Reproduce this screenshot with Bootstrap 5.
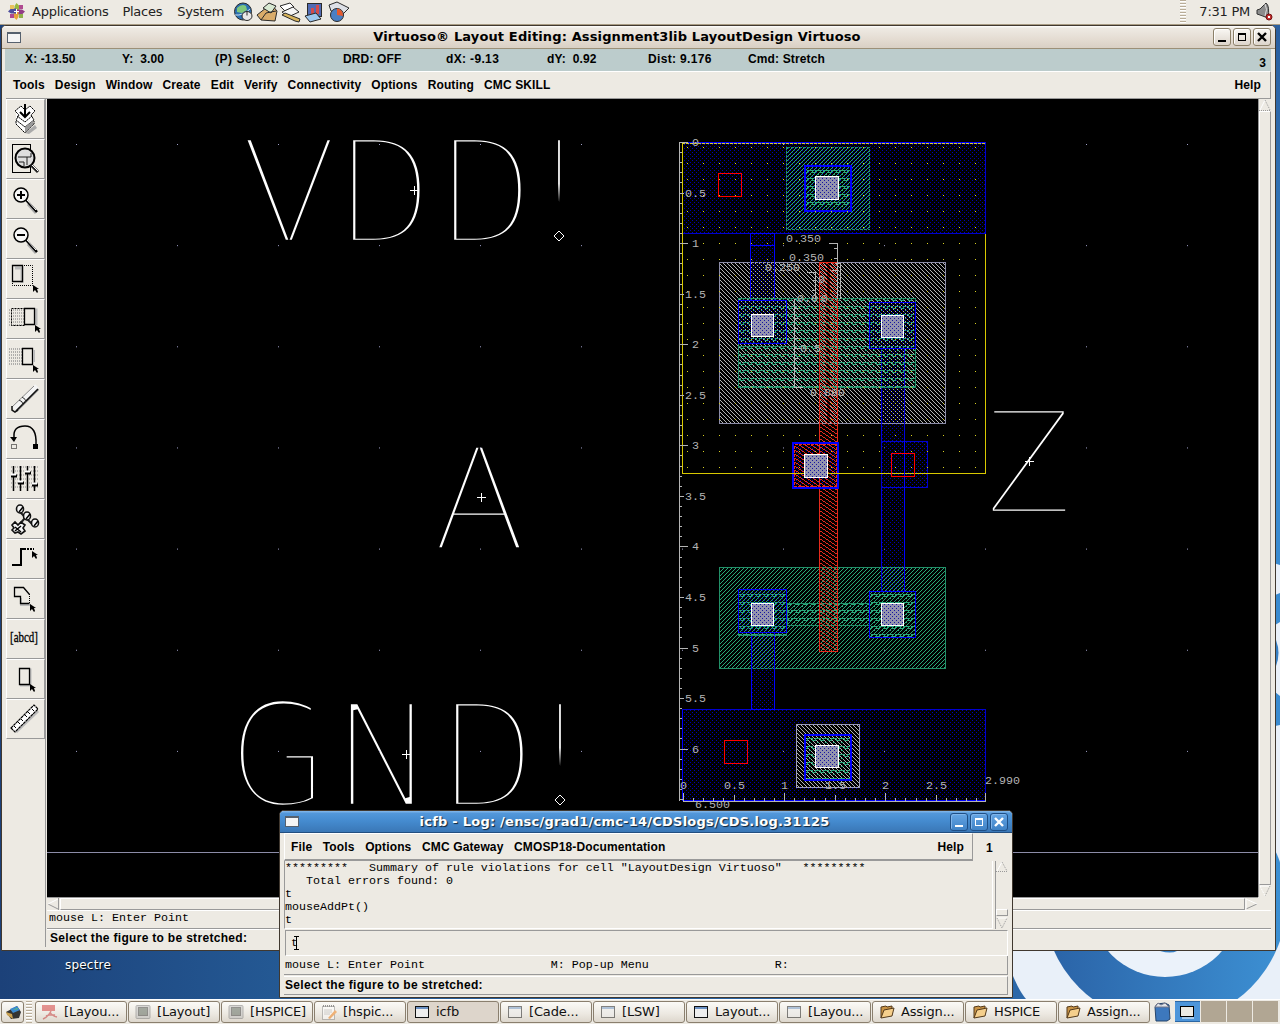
<!DOCTYPE html>
<html lang="en">
<head>
<meta charset="utf-8">
<title>Virtuoso Layout Editing</title>
<link rel="stylesheet" href="https://cdn.jsdelivr.net/npm/bootstrap@5.3.0/dist/css/bootstrap.min.css">
<style>
body{width:1280px;height:1024px;overflow:hidden;font:13px/1 "DejaVu Sans",sans-serif;color:#000;background:#edeae3}
svg{display:block;flex:none}
.panel-top{height:25px;border-bottom:1px solid #a89c84;background:#edeae3}
.panel-top .txt{font-size:13px;line-height:24px;color:#222;white-space:pre;letter-spacing:-.25px}
.logo{margin-left:8px}
.launch{margin-left:8px}
.grip{width:6px;background:repeating-linear-gradient(#b9ad98 0 1px,#fff 1px 2px,#edeae3 2px 3px)}
.desk{height:974px;background:linear-gradient(90deg,#1c4179,#245994 22%,#2c68a9 80%,#2a67aa)}
.wall{left:0;top:0}
.spectre{left:65px;top:933px;font-size:12px;line-height:14px;letter-spacing:.2px;color:#fff;text-shadow:1px 1px 1px #000}
.win{background:#edeae3;border:1px solid #40382f;border-radius:5px 5px 0 0}
.win-main{left:1px;top:0;width:1275px;height:926px;border-left-width:1px}
.win-log{left:279px;top:785px;width:734px;height:188px}
.tbar{height:23px;border-radius:4px 4px 0 0;background:linear-gradient(#fff,#eeeae3 10%,#e4dcd2 60%,#d9d0c4);border-bottom:1px solid #9c9078}
.win-log .tbar{height:22px;background:linear-gradient(#86b9ea,#5297da 12%,#448ace 50%,#3a77b6);border-bottom:1px solid #234f80;color:#fff}
.ttl{font-weight:700;font-size:13px;line-height:22px;text-align:center;white-space:nowrap;letter-spacing:.13px}
.win-log .ttl{text-shadow:1px 1px 1px #123;letter-spacing:.23px}
.wicon{width:14px;height:11px;border:1px solid #56616e;border-top-width:2px;background:#f5f5f5;margin-left:5px}
.wb{width:18px;height:18px;border:1px solid #8c8069;border-radius:3px;background:linear-gradient(#f9f7f3,#ddd5cb);box-shadow:inset 1px 1px 0 #fff}
.win-log .wb{border-color:#1f4f86;background:linear-gradient(#65a5e4,#3f82c6);box-shadow:inset 1px 1px 0 #7fb4ea}
.hb{font-family:"Liberation Sans",Arial,sans-serif;font-weight:700;font-size:12px;letter-spacing:.13px;white-space:pre}
.mn{font-family:"Liberation Mono",monospace;font-size:11.67px;white-space:pre}
.stat{height:22px;background:#bccccc;margin:0 4px 0 3px;line-height:20px}
.stat span{flex:none}
.menu{height:28px;margin:0 4px 0 4px;border-top:1px solid #fff;border-right:1px solid #999;border-bottom:1px solid #999;line-height:26px;padding-left:7px;padding-right:9px}
.menu .items{gap:10.1px}
.tools{width:40px;margin-left:4px}
.tool{height:40px;width:39px;border-top:1px solid #fff;border-left:1px solid #fff;border-right:1px solid #999;border-bottom:1px solid #999}
.toolcol{height:848px;border-right:1px solid #999}
.sb-v{width:13px;border-left:1px solid #999;background:#edeae3}
.thumb{border:1px solid #fff;border-right-color:#999;border-bottom-color:#999}
.sb-h{height:13px;border-top:1px solid #999;width:1211px}
.msg1{height:19px;border-top:1px solid #fff;border-bottom:1px solid #999;line-height:15px;padding-left:2px;width:1224px}
.msg2{height:20px;border-top:1px solid #fff;line-height:17px;padding-left:3px;letter-spacing:.31px}
.lab{fill:#b4b4b4;font:11.67px "Liberation Mono",monospace;white-space:pre}
.big{fill:#fff;font-family:"DejaVu Sans";font-weight:200;font-size:142px;stroke:#000;stroke-width:4.6px}
.lmenu{height:28px;line-height:26px;margin:0 39px 0 4px;border:1px solid #fff;border-right-color:#999;border-bottom:2px solid #999;padding:0 8px 0 6px}
.lmenu .items{gap:10.6px}
.ws{left:706px;top:9px}
.logout{height:68px;margin:0 3px 0 4px}
.logtxt{width:709px;border-left:1px solid #999;border-right:1px solid #fff;border-bottom:1px solid #fff;line-height:13px;padding-top:1px}
.linp{height:26px;margin:1px 4px 0 5px;border:1px solid #999;border-right-color:#fff;border-bottom-color:#fff;line-height:23px;padding-left:5px}
.lmsg{height:19px;margin:0 4px 0 4px;border-right:1px solid #999;border-bottom:1px solid #999;padding-left:1px;line-height:19px}
.lprm{height:19px;margin:1px 4px 0 4px;border-top:1px solid #fff;border-right:1px solid #999;border-bottom:1px solid #999;padding-left:1px;line-height:17px;letter-spacing:.33px}
.taskbar{height:25px;border-top:1px solid #fff;padding:1px 0 1px 1px}
.tb{width:92px;height:22px;margin-right:1px;border:1px solid #8a7f6e;border-radius:3px;background:linear-gradient(#fbfaf7,#ece8e1 60%,#ddd7cd);padding-left:6px;gap:6px;white-space:nowrap;overflow:hidden;line-height:20px;letter-spacing:-.15px;color:#111}
.tb.on{background:#ddd5cb}
.tb.showdesk{width:23px;padding:0}
.min{opacity:.5}
.wsp{width:25px;height:21px;background:#b1a693;margin-right:1px}
.wsp.on{background:#4d95da;border-top:1px solid #2c67a4;border-bottom:1px solid #2c67a4}
.wbs{gap:2px;margin-right:4px}
</style>
</head>
<body>
<div class="panel-top d-flex align-items-center">
 <svg class="logo" width="18" height="18" viewBox="0 0 18 18"><path d="M8.500 0l3 3v5h-5V3z" fill="#9ab93c"/><path d="M17 8.500l-3 3H9v-5h5z" fill="#923c87"/><path d="M8.500 17l-3-3V9h5v5z" fill="#e8a33a"/><path d="M0 8.500l3-3h5v5H3z" fill="#4d4d9e"/><rect x="2" y="2" width="4" height="4" fill="#e9c25d"/><rect x="11" y="11" width="4" height="4" fill="#8fb04a"/><rect x="11" y="2" width="4" height="4" fill="#b04a90"/><rect x="2" y="11" width="4" height="4" fill="#b04a90"/><path d="M8.500 6v5M6 8.500h5" stroke="#fff"/></svg>
 <span class="txt" style="margin-left:6px">Applications</span><span class="txt" style="margin-left:14px">Places</span><span class="txt" style="margin-left:15px">System</span>
 <svg class="launch" width="120" height="22" viewBox="0 0 120 22" stroke="#2a2a2a" stroke-width="1">
  <circle cx="11" cy="10.500" r="8.500" fill="#2b6fb0"/><path d="M5 7q5-5 9-2l1 4-5 3-5-1z" fill="#7fc77c" stroke="none"/><path d="M3 14q8 1 15-6" fill="none" stroke="#cfe4f4"/><ellipse cx="15" cy="15" rx="5" ry="4.500" fill="#e8e8e8"/><path d="M15 10.500v4" />
  <path d="M25 14l14-11 6 7-2 10-14-1z" fill="#d9ac6a"/><path d="M31 7l6-5 7 3-5 7z" fill="#d8e9d2"/><path d="M29 19l5-7 10-2" fill="none"/>
  <path d="M48 5l10-3 4 4-9 4z" fill="#fff"/><path d="M50 11l11-5 6 5-11 5z" fill="#f5f5f5"/><path d="M50 14l3-2 15 6-1 3-4-1z" fill="#d8b45c"/>
  <rect x="75.500" y="2.500" width="14" height="13" fill="#516bb4"/><path d="M79 13V7h3v6M84 13V4h3v9" fill="#d24c4c" stroke="none"/><path d="M73 15l11-3 5 6-11 3z" fill="#9cc7ef"/>
  <path d="M97 4l8-3 12 6-6 6-12-3z" fill="#dde0e6"/><circle cx="105" cy="14" r="6.500" fill="#4a7fc4"/><path d="M105 14V7.500A6.500 6.500 0 0 1 111 15z" fill="#e55a2d" stroke="none"/>
 </svg>
 <div class="ms-auto grip" style="height:24px"></div>
 <span class="txt" style="margin-left:13px">7:31 PM</span>
 <svg width="18" height="20" viewBox="0 0 18 20" style="margin:0 6px 0 6px"><path d="M1 8l3-1 6-6q4 3 2 15l-8-3-3-1z" fill="#8c8c8c" stroke="#333"/><path d="M9 2q3 5 0 12" stroke="#ddd" fill="none"/><circle cx="13" cy="15" r="3" fill="#c22f2f" stroke="#711"/><path d="M12 14l2 2m0-2l-2 2" stroke="#fff"/></svg>
</div>

<div class="desk position-relative overflow-hidden">
 <svg class="wall position-absolute" width="1280" height="974" viewBox="0 25 1280 974"><defs><linearGradient id="ring" x1="0" x2="1"><stop offset="0" stop-color="#2a62a6"/><stop offset="1" stop-color="#3d91d4"/></linearGradient><linearGradient id="edge" x1="0" x2="0" y1="0" y2="1"><stop offset="0" stop-color="#2b5f9f"/><stop offset=".5" stop-color="#3a8bd0"/></linearGradient></defs>
  <path d="M1270 25h10v800h-10z" fill="url(#edge)"/><path d="M1270 562l10 3v28l-10 4zM1270 628l10-6v74l-10-8zM1270 727l10-2v150h-10z" fill="#e9f0f9"/><path d="M1276 640q5 13 0 26z" fill="#3780c4"/>
  <path d="M960 800H1280V999H1026Q1014 985 1000 940z" fill="#e9f0f9"/><circle cx="1165" cy="901.500" r="121.500" fill="url(#ring)"/><circle cx="1165" cy="901.500" r="75.500" fill="#ebf2fa"/><path d="M1160 951q11 3 17 0z" fill="#3780c4"/></svg>
 <div class="spectre position-absolute">spectre</div>

 <div class="win win-main position-absolute d-flex flex-column">
  <div class="tbar d-flex align-items-center">
   <div class="wicon"></div><div class="ttl flex-fill">Virtuoso® Layout Editing: Assignment3lib LayoutDesign Virtuoso</div>
   <div class="wbs d-flex">
    <div class="wb"><svg width="16" height="16"><path d="M4 11h8v2H4z"/></svg></div>
    <div class="wb"><svg width="16" height="16"><path d="M4 4h8v8H4zM5 6v5h6V6z" fill-rule="evenodd"/></svg></div>
    <div class="wb"><svg width="16" height="16"><path d="M4 4l8 8M12 4l-8 8" stroke="#000" stroke-width="2.400"/></svg></div>
   </div>
  </div>
  <div class="stat hb d-flex"><span style="width:97px;padding-left:20px">X: -13.50</span><span style="width:93px;padding-left:20px">Y:  3.00</span><span style="width:128px;padding-left:20px;letter-spacing:.55px">(P) Select: 0</span><span style="width:103px;padding-left:20px">DRD: OFF</span><span style="width:101px;padding-left:20px;letter-spacing:.35px">dX: -9.13</span><span style="width:101px;padding-left:20px">dY:  0.92</span><span style="width:100px;padding-left:20px;letter-spacing:.35px">Dist: 9.176</span><span style="padding-left:20px">Cmd: Stretch</span><span class="ms-auto" style="padding:4px 5px 0 0">3</span></div>
  <div class="menu hb d-flex justify-content-between"><div class="items d-flex"><span>Tools</span><span>Design</span><span>Window</span><span>Create</span><span>Edit</span><span>Verify</span><span>Connectivity</span><span>Options</span><span>Routing</span><span>CMC SKILL</span></div><span>Help</span></div>
  <div class="d-flex flex-fill">
   <div class="tools toolcol d-flex flex-column" id="tools">
    <div class="tool"><svg width="38" height="38" viewBox="6 100 38 38"><path d="M24 133l10-8 2 3-8 6z" fill="#aaa"/><path d="M15 110l5-4 4 4 5-4 5 4-4 5 3 5-9 12-10-9 1-4z" fill="#fff"/><path d="M14 111l6-5 4 4 5-4 5 5-4 4 3 5-9 7-9-7 3-5zM15 121v3l9 9 9-9v-3M16 116l8 6 7-6" fill="none" stroke="#000" stroke-dasharray="2 .500"/><path d="M24 127v6l8-8v-4z" fill="#999"/><path d="M24 104v12m-5-4l5 5 5-5" stroke="#000" stroke-width="2" fill="none"/></svg></div>
    <div class="tool"><svg width="38" height="38" viewBox="6 140 38 38"><rect x="11.500" y="144.500" width="18" height="28" fill="none" stroke="#000"/><circle cx="24" cy="158" r="9.500" fill="#dedede" stroke="#000" stroke-width="2"/><path d="M17 157h13v-4M18 162h5v4M26 157v8" stroke="#222" fill="none"/><path d="M30 165l7 7" stroke="#222" stroke-width="3"/><path d="M31 165l6 6" stroke="#fff"/></svg></div>
    <div class="tool"><svg width="38" height="38" viewBox="6 180 38 38"><path d="M27 204l8 9" stroke="#aaa" stroke-width="3"/><circle cx="20" cy="195" r="7" fill="#f7f7f7" stroke="#000" stroke-width="1.500"/><path d="M16 195h8M20 191v8" stroke="#000" stroke-width="2"/><path d="M25 200l11 12" stroke="#000" stroke-width="2.500"/><path d="M26 200l9 10" stroke="#fff"/></svg></div>
    <div class="tool"><svg width="38" height="38" viewBox="6 180 38 38"><path d="M27 204l8 9" stroke="#aaa" stroke-width="3"/><circle cx="20" cy="195" r="7" fill="#f7f7f7" stroke="#000" stroke-width="1.500"/><path d="M16 195h8" stroke="#000" stroke-width="2"/><path d="M25 200l11 12" stroke="#000" stroke-width="2.500"/><path d="M26 200l9 10" stroke="#fff"/></svg></div>
    <div class="tool"><svg width="38" height="38" viewBox="6 260 38 38"><path d="M14 268h7v15" stroke="#bbb" stroke-width="3" fill="none"/><path d="M11.500 265.500h10v16h-10z" fill="none" stroke="#000" stroke-width="1.300"/><path d="M23 265.500h8.500v20h-20v-3" fill="none" stroke="#000" stroke-dasharray="1 1"/><path d="M32 285v7l2-2 2 3 1-1-1-3h2z"/></svg></div>
    <div class="tool"><svg width="38" height="38" viewBox="6 300 38 38"><path d="M8 310h15M8 313h15M8 316h15M8 319h15M8 322h15M8 325h15" stroke="#777" stroke-dasharray="1 1"/><path d="M10.500 308.500h13v17h-13z" fill="none" stroke="#000" stroke-dasharray="2 1"/><path d="M25 310h10v15" stroke="#bbb" stroke-width="3" fill="none"/><path d="M23.500 308.500h10v16h-10z" fill="#edeae3" stroke="#000" stroke-width="1.300"/><path d="M34 325v7l2-2 2 3 1-1-1-3h2z"/></svg></div>
    <div class="tool"><svg width="38" height="38" viewBox="6 340 38 38"><path d="M8 349h13M8 352h13M8 355h13M8 358h13M8 361h13M8 364h13" stroke="#999" stroke-width="1.500" stroke-dasharray="1 1"/><path d="M21.500 348.500h10v16h-10z" fill="#edeae3" stroke="#000" stroke-width="1.300"/><path d="M33 350v12" stroke="#bbb" stroke-width="2"/><path d="M32 365v7l2-2 2 3 1-1-1-3h2z"/></svg></div>
    <div class="tool"><svg width="38" height="38" viewBox="6 380 38 38"><path d="M15 411L37 389" stroke="#999" stroke-width="3"/><path d="M13 409L36 386" stroke="#f4f4f4" stroke-width="5"/><path d="M15 411L37 389" stroke="#111" stroke-width="1.600"/><path d="M11 407L33 386" stroke="#888"/><path d="M11 406v4l3 2 3-2" stroke="#111" fill="none" stroke-width="1.500"/><path d="M18 400q4 1 4 5m-1-8q4 2 4 5" stroke="#333" fill="none"/></svg></div>
    <div class="tool"><svg width="38" height="38" viewBox="6 420 38 38"><path d="M13 437q-1-11 11-11t11 19" stroke="#000" stroke-width="1.500" fill="none"/><path d="M9 437h7l-3 5z"/><rect x="32" y="444" width="5" height="5"/><rect x="10.500" y="444.500" width="5" height="4" fill="none" stroke="#000" stroke-dasharray="1 1"/></svg></div>
    <div class="tool"><svg width="38" height="38" viewBox="6 460 38 38"><path d="M10 467h28M10 471h28M10 475h28M10 479h28M10 483h28M10 487h28" stroke="#888" stroke-dasharray="1 1"/><path d="M12.500 466v25M19.500 466v25M26.500 466v25M33.500 466v25" stroke="#000" stroke-width="1.500"/><path d="M10 476h6M17 483h6M24 473h6M31 485h6" stroke="#000" stroke-width="3"/><path d="M10 474.500h5M17 481.500h5M24 471.500h5M31 483.500h5" stroke="#fff" stroke-width="2"/></svg></div>
    <div class="tool"><svg width="38" height="38" viewBox="6 500 38 38"><path d="M19 512l14 14M24 518l-7 8" stroke="#222" stroke-width="2"/><g fill="#f5f5f5" stroke="#111" stroke-width="1.600"><ellipse cx="19" cy="509" rx="3.500" ry="4"/><ellipse cx="26" cy="516" rx="3.500" ry="4"/><ellipse cx="34" cy="523" rx="3.500" ry="4"/><path d="M11 525l3-3 3 3 3-3 4 3-2 3 2 3-4 3-3-2-3 1-3-3 2-2z"/></g><path d="M18 512l4-5M25 519l4-5M33 526l4-5M14 527l6 5M20 526l-6 5" stroke="#000" stroke-width="1.500"/></svg></div>
    <div class="tool"><svg width="38" height="38" viewBox="6 540 38 38"><path d="M11 565h9v-16h5" stroke="#000" stroke-width="2" fill="none"/><path d="M26 549h7" stroke="#000" stroke-width="2" stroke-dasharray="2 1"/><path d="M31 551v7l2-2 2 3 1-1-1-3h2z"/></svg></div>
    <div class="tool"><svg width="38" height="38" viewBox="6 580 38 38"><path d="M20 598v7h10" stroke="#bbb" stroke-width="2" fill="none"/><path d="M28.500 603.500h-9v-7h-6v-9h9l6 7" stroke="#000" stroke-width="1.300" fill="none"/><path d="M28.500 594v10" stroke="#000" stroke-dasharray="1 1"/><path d="M29 604v7l2-2 2 3 1-1-1-3h2z"/></svg></div>
    <div class="tool"><svg width="38" height="38" viewBox="6 620 38 38"><text x="9" y="642" textLength="28" lengthAdjust="spacingAndGlyphs" font-family="Liberation Serif" font-size="14" stroke="#000" stroke-width=".3">[abcd]</text></svg></div>
    <div class="tool"><svg width="38" height="38" viewBox="6 660 38 38"><path d="M20 670h9v15H19" stroke="#bbb" stroke-width="3" fill="none"/><path d="M18.500 668.500h10v16h-10z" fill="#edeae3" stroke="#000" stroke-width="1.300"/><path d="M29 684v7l2-2 2 3 1-1-1-3h2z"/></svg></div>
    <div class="tool"><svg width="38" height="38" viewBox="6 700 38 38"><path d="M15 732l22-21" stroke="#bbb" stroke-width="3"/><path d="M10 728l23-23 4 4-23 23z" fill="#fff" stroke="#000" stroke-width="1.200" stroke-dasharray="3 .500"/><path d="M13 726l2 2M17 722l2 2M20 719l2 2M24 715l2 2M27 712l2 2M31 709l2 2" stroke="#000"/></svg></div>
   </div>
   <div class="d-flex flex-column" style="margin-left:1px">
    <div class="d-flex">
     <svg id="cv" width="1211" height="798" viewBox="47 99 1211 798" shape-rendering="crispEdges" style="background:#000">
      <defs>
       <pattern id="bd" width="4" height="4" patternUnits="userSpaceOnUse"><path fill="#0000b4" d="M0 0h1v1H0zM2 2h1v1H2z"/></pattern>
       <pattern id="cd" width="4" height="4" patternUnits="userSpaceOnUse"><rect width="4" height="4" fill="#9494ae"/><path fill="#1414a0" d="M0 0h1v1H0zM2 2h1v1H2z"/></pattern>
       <pattern id="gr" width="4" height="4" patternUnits="userSpaceOnUse"><path fill="#b4b4b4" d="M0 0h1v1H0zM1 1h1v1H1zM2 2h1v1H2zM3 3h1v1H3z"/></pattern>
       <pattern id="gn" width="4" height="4" patternUnits="userSpaceOnUse"><path fill="#28a878" d="M3 0h1v1H3zM2 1h1v1H2zM1 2h1v1H1zM0 3h1v1H0z"/></pattern>
       <pattern id="rd" width="6" height="4" patternUnits="userSpaceOnUse"><path fill="#e62a1c" d="M0 0h1v1H0zM1 1h2v1H1zM3 2h1v1H3zM4 3h2v1H4z"/></pattern>
       <pattern id="wv" width="8" height="8" patternUnits="userSpaceOnUse"><path fill="#2aa87c" d="M0 2h4v1H0zM4 2h1v3H4zM4 4h4v1H4zM7 2h1v3H7zM1 6h2v1H1z"/></pattern>
       <pattern id="yd" x="687" y="147" width="16" height="16" patternUnits="userSpaceOnUse"><rect width="1" height="1" fill="#d8d020"/></pattern>
       <pattern id="wd" x="76" y="144" width="101" height="101.150" patternUnits="userSpaceOnUse"><rect width="1" height="1" fill="#a0a0c8"/></pattern>
      </defs>
      <g class="big" shape-rendering="auto" id="labels"></g>
      <g stroke="#fff" fill="none"><path d="M410 190.500h9M414.500 186v9M477 497.500h9M481.500 493v9M1025 461.500h9M1029.500 457v9M402 754.500h9M406.500 750v9"/><path fill="#000" shape-rendering="auto" d="M559 231l5 5-5 5-5-5zM560 795l5 5-5 5-5-5z"/></g>
      <path d="M47 852.500H1258" stroke="#8c8ca8"/>
      <rect x="76" y="144" width="1120" height="660" fill="url(#wd)"/>
      <g fill="none">
       <rect x="682.500" y="143.500" width="303" height="90" fill="url(#bd)" stroke="#0000d0"/>
       <rect x="682.500" y="709.500" width="303" height="91" fill="url(#bd)" stroke="#0000d0"/>
       <rect x="719.500" y="262.500" width="226" height="161" fill="url(#gr)" stroke="#8c8ca8"/>
       <rect x="719.500" y="567.500" width="226" height="101" fill="url(#gn)" stroke="#229068"/>
       <rect x="750.500" y="233.500" width="24" height="67" fill="url(#bd)" stroke="#00f"/><path d="M750 245.500h25" stroke="#00f"/>
       <rect x="751.500" y="632.500" width="23" height="77" fill="url(#bd)" stroke="#00f"/>
       <rect x="881.500" y="348.500" width="23" height="243" fill="url(#bd)" stroke="#0000e0"/>
       <rect x="738.500" y="298.500" width="177" height="89" fill="url(#wv)" stroke="#229068"/>
       <path d="M738 346.500h50" stroke="#229068"/>
       <rect x="738.500" y="300.500" width="48" height="43" fill="url(#bd)" stroke="#00f"/>
       <rect x="869.500" y="302.500" width="46" height="46" fill="url(#bd)" stroke="#00f"/>
       <rect x="787.500" y="603.500" width="82" height="22" fill="url(#wv)" stroke="#229068"/>
       <rect x="738.500" y="589.500" width="48" height="46" fill="url(#wv)" stroke="#229068"/>
       <rect x="738.500" y="589.500" width="48" height="43" fill="url(#bd)" stroke="#00f"/>
       <rect x="869.500" y="591.500" width="46" height="46" fill="url(#wv)" stroke="#00f"/>
       <rect x="786.500" y="147.500" width="83" height="82" fill="url(#gn)" stroke="#229068" stroke-dasharray="3 1"/>
       <rect x="805" y="166" width="46" height="45" fill="url(#wv)" stroke="#00f" stroke-width="2"/>
       <rect x="796.500" y="724.500" width="63" height="63" fill="url(#gr)" stroke="#9c9cbe"/>
       <rect x="805" y="735" width="46" height="45" fill="url(#wv)" stroke="#00f" stroke-width="2"/>
       <rect x="819.500" y="262.500" width="18" height="389" fill="url(#rd)" stroke="#e62a1c"/>
       <rect x="793" y="443" width="45" height="45" fill="url(#bd)" stroke="#00f" stroke-width="2"/>
       <rect x="794.500" y="444.500" width="42" height="42" fill="url(#rd)" stroke="#e62a1c" stroke-dasharray="3 1"/>
       <rect x="881.500" y="441.500" width="46" height="46" fill="url(#bd)" stroke="#0000d0"/>
       <rect x="682" y="147" width="303" height="326" fill="url(#yd)"/>
       <path d="M682.500 143v330.500H985.500V234" stroke="#d8c800"/><path d="M682 142.500h304" stroke="#00f"/><path d="M682 143.500h304" stroke="#d8d020" stroke-dasharray="3 1"/>
       <path d="M904.500 441v150" stroke="#00f"/><path d="M682.500 710v90M682 800.500h304" stroke="#00f"/>
       <g stroke="#f00"><rect x="718.500" y="173.500" width="23" height="23"/><rect x="891.500" y="453.500" width="23" height="23"/><rect x="724.500" y="740.500" width="23" height="23"/></g>
       <g fill="url(#cd)" stroke="#fff"><rect x="815.500" y="176.500" width="23" height="23"/><rect x="751.500" y="314.500" width="22" height="22"/><rect x="881.500" y="315.500" width="22" height="22"/><rect x="804.500" y="454.500" width="23" height="23"/><rect x="751.500" y="603.500" width="22" height="22"/><rect x="881.500" y="603.500" width="22" height="22"/><rect x="815.500" y="745.500" width="23" height="22"/></g>
       <path stroke="#b4b4b4" d="M829 243.500h8.500v55M834 248.500h3M834 258.500h3M832 270.500h5M836 263.500h4.500v35M807 272.500h8.500v26M812 280.500h3M812 290.500h3M794.500 299v88.500h8M794 308.500h4M794 318.500h4M794 328.500h4M794 338.500h4M794 348.500h7M794 358.500h4M794 368.500h4M794 379.500h4"/>
       <path id="ticks" stroke="#b4b4b4"/>
      </g>
      <g class="lab" id="nums"></g>
     </svg>
     <div class="sb-v d-flex flex-column"><svg width="12" height="12"><path d="M6 1L1 11" stroke="#fff"/><path d="M6 1l5 10M0 11.500h12" stroke="#999" stroke-dasharray="1 1"/></svg><div class="thumb flex-fill"></div><svg width="12" height="12"><path d="M1 1h10" stroke="#fff"/><path d="M11 1L6 11" stroke="#999" stroke-dasharray="1 1"/><path d="M1 1l5 10" stroke="#fff" stroke-dasharray="2 1"/></svg></div>
    </div>
    <div class="sb-h d-flex"><svg width="13" height="12"><path d="M11.500 0v12M1 6l10 5" stroke="#999" fill="none"/><path d="M1 6l10-5" stroke="#fff"/></svg><div class="thumb flex-fill"></div><svg width="13" height="12"><path d="M1 11L12 6" stroke="#999"/><path d="M1 0v12M1 1l11 5" stroke="#fff"/></svg></div>
    <div class="msg1 mn">mouse L: Enter Point</div>
    <div class="msg2 hb">Select the figure to be stretched:</div>
   </div>
  </div>
 </div>

 <div class="win win-log position-absolute">
  <div class="tbar d-flex align-items-center">
   <div class="wicon"></div><div class="ttl flex-fill">icfb - Log: /ensc/grad1/cmc-14/CDSlogs/CDS.log.31125</div>
   <div class="wbs d-flex">
    <div class="wb"><svg width="16" height="16"><path fill="#fff" d="M4 11h8v2H4z"/></svg></div>
    <div class="wb"><svg width="16" height="16"><path fill="#fff" d="M4 4h8v8H4zM5 6v5h6V6z" fill-rule="evenodd"/></svg></div>
    <div class="wb"><svg width="16" height="16"><path d="M4 4l8 8M12 4l-8 8" stroke="#fff" stroke-width="2.400"/></svg></div>
   </div>
  </div>
  <div class="position-relative">
   <div class="lmenu hb d-flex justify-content-between"><div class="items d-flex"><span>File</span><span>Tools</span><span>Options</span><span>CMC Gateway</span><span>CMOSP18-Documentation</span></div><span>Help</span></div>
   <span class="ws hb position-absolute">1</span>
  </div>
  <div class="logout d-flex justify-content-between"><div class="logtxt mn">*********   Summary of rule violations for cell "LayoutDesign Virtuoso"   *********
   Total errors found: 0
t
mouseAddPt()
t</div><div class="sb-v d-flex flex-column" style="margin-right:1px"><svg width="12" height="11"><path d="M6 1L1 10" stroke="#fff"/><path d="M6 1l5 9M0 10.500h12" stroke="#999" stroke-dasharray="1 1"/></svg><div class="flex-fill"></div><div class="thumb" style="height:7px"></div><svg width="12" height="13"><path d="M1 2h10" stroke="#fff"/><path d="M1 2l5 10 5-10" fill="none" stroke="#999" stroke-dasharray="1 1"/></svg></div></div>
  <div class="linp mn d-flex align-items-center"><span>t</span><svg width="5" height="14" style="margin-left:-4px"><path d="M0 .500h5M0 13.500h5M2.500 0v14" stroke="#000"/></svg></div>
  <div class="lmsg mn">mouse L: Enter Point                  M: Pop-up Menu                  R:</div>
  <div class="lprm hb">Select the figure to be stretched:</div>
 </div>
</div>

<div class="taskbar d-flex" id="task">
 <div class="tb showdesk justify-content-center align-items-center d-flex"><svg width="18" height="16"><path d="M2 8l11-6 4 6-2 6-8 1z" fill="#333"/><path d="M6 5l7-3 3 4-7 3z" fill="#3b8ad0"/><path d="M9 6l4-2 1 1z" fill="#6c6"/><path d="M2 8l6 2 1 5-6-4z" fill="#c8a050"/></svg></div>
 <div class="grip" style="margin:0 3px 0 1px"></div>
</div>
<svg width="0" height="0" class="position-absolute">
 <symbol id="i-pdf" viewBox="0 0 16 16"><path d="M0 1h13v6H0z" fill="#d03030"/><path d="M9 7q-3 6-8 8M8 8q2 4 7 5M4 12q5-2 9-1" stroke="#c03030" stroke-width="1.500" fill="none"/></symbol>
 <symbol id="i-term" viewBox="0 0 16 16"><rect x="1" y="1.500" width="14" height="13" rx="1" fill="#bbb" stroke="#777"/><rect x="3.500" y="3.500" width="9" height="8" fill="#556055" stroke="#333"/></symbol>
 <symbol id="i-note" viewBox="0 0 16 16"><rect x="1.500" y="2.500" width="12" height="13" fill="#fff" stroke="#888"/><path d="M2 2h11" stroke="#333" stroke-width="2" stroke-dasharray="1 1"/><path d="M3 6h8M3 8h8M3 10h6" stroke="#aaa"/><path d="M7 14l7-8 2 2-7 7z" fill="#f07a0c"/></symbol>
 <symbol id="i-win" viewBox="0 0 16 16"><rect x="1.500" y="2.500" width="13" height="11" fill="#eee" stroke="#111"/><path d="M2 4h12" stroke="#6b91c4" stroke-width="2"/></symbol>
 <symbol id="i-dir" viewBox="0 0 16 16"><path d="M2 14V3l5-1 1 1 5-1v4" fill="#c99446" stroke="#53391a"/><path d="M2 14l3-8 10-2-2 8z" fill="#f5cf8c" stroke="#53391a"/></symbol>
</svg>
<script src="https://cdn.jsdelivr.net/npm/bootstrap@5.3.0/dist/js/bootstrap.bundle.min.js"></script>
<script>
// Ruler ticks: 0.5 units every 50.55 px, ten-pixel minor steps
let d='M679.5 142.500V801M683 801.500H986';
for(let i=0;i<=65;i++){const y=Math.round(143+i*10.11)-.5;d+=`M679 ${y}h${i%10==0?9:i%5==0?5:3}`}
for(let i=0;i<=29;i++){const x=Math.round(683+i*10.11)+.5;d+=`M${x} 801v-${i%10==0?8:i%5==0?6:3}`}
d+='M985.5 801v-8';
document.getElementById('ticks').setAttribute('d',d);
const nums=[[692,146,'0'],[685,197,'0.5'],[692,247,'1'],[685,298,'1.5'],[692,348,'2'],[685,399,'2.5'],[692,449,'3'],[685,500,'3.5'],[692,550,'4'],[685,601,'4.5'],[692,652,'5'],[685,702,'5.5'],[692,753,'6'],
[680,789,'0'],[724,789,'0.5'],[781,789,'1'],[825,789,'1.5'],[882,789,'2'],[926,789,'2.5'],[985,784,'2.990'],[695,808,'6.500'],
[786,242,'0.350'],[789,261,'0.350'],[765,271,'0.250'],[818,283,'0'],[797,302,'0.0'],[821,302,'0'],[800,352,'0.5'],[810,396,'0.880']];
document.getElementById('nums').innerHTML=nums.map(([x,y,t])=>`<text x="${x}" y="${y}">${t}</text>`).join('');
const letters=[[240,242,98,'V'],[336,242,96,'D'],[437,242,96,'D'],[536,242,46,'!'],[228,805,101,'G'],[332,806,103,'N'],[439,806,96,'D'],[537,806,46,'!'],[432,550,95,'A'],[985,513,88,'Z']];
document.getElementById('labels').innerHTML=letters.map(([x,y,w,t])=>`<text x="${x}" y="${y}" textLength="${w}" lengthAdjust="spacingAndGlyphs">${t}</text>`).join('');
const tasks=[['pdf','[Layou...',1],['term','[Layout]',1],['term','[HSPICE]',1],['note','[hspic...',1],['win','icfb',0],['win','[Cade...',1],['win','[LSW]',1],['win','Layout...',0],['win','[Layou...',1],['dir','Assign...',0],['dir','HSPICE',0],['dir','Assign...',0]];
document.getElementById('task').insertAdjacentHTML('beforeend',tasks.map(([i,t,m])=>`<div class="tb d-flex align-items-center${t=='icfb'?' on':''}"><svg width="16" height="16" class="${m?'min':''}"><use href="#i-${i}"/></svg><span>${t}</span></div>`).join('')+
'<svg width="20" height="20" style="margin:1px 3px 0 1px"><path d="M3 5l2-3 8-1 4 2 1 14-3 2H4z" fill="#3d78bd" stroke="#27456b"/><path d="M3 5l3-4 3 2 4-2 4 4z" fill="#e0e4e8" stroke="#778"/></svg><div class="wsp on"><svg width="25" height="19"><rect x="5.500" y="4.500" width="13" height="10" fill="#edeae3" stroke="#000"/><path d="M7 16h12" stroke="#fff"/></svg></div><div class="wsp"></div><div class="wsp"></div><div class="wsp"></div>');
</script>
</body>
</html>
